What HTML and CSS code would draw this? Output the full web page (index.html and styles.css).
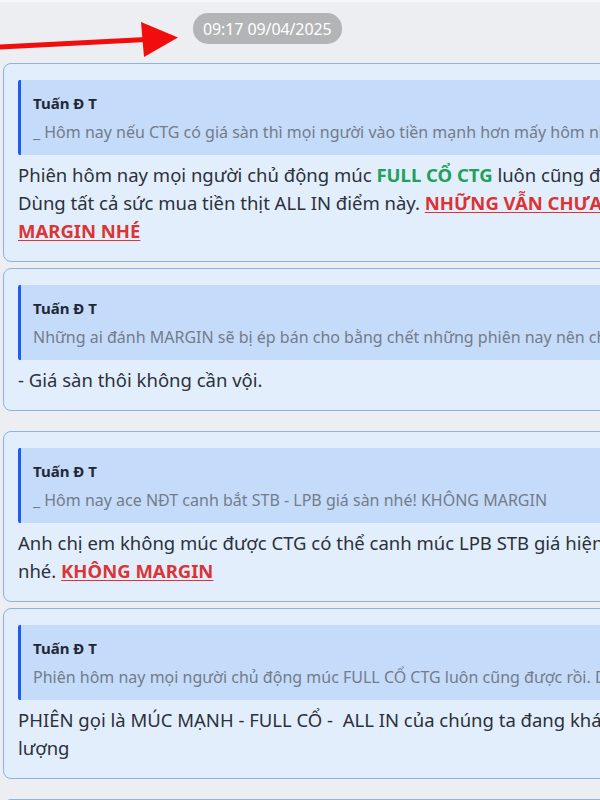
FILE: index.html
```html
<!DOCTYPE html>
<html lang="vi">
<head>
<meta charset="utf-8">
<title>Chat</title>
<link rel="stylesheet" href="styles.css">
</head>
<body>
<div class="screen">
  <svg class="arrow" width="200" height="70" viewBox="0 0 200 70" aria-hidden="true">
    <line x1="-2" y1="47" x2="146" y2="39.5" stroke="#f20d0d" stroke-width="5"/>
    <polygon points="141,22 178,37.5 144,57" fill="#f20d0d"/>
  </svg>
  <div class="stamp-row"><span class="stamp">09:17 09/04/2025</span></div>
  <div class="feed">
    <div class="card">
      <div class="quote">
        <div class="q-name">Tuấn Đ T</div>
        <div class="q-text">_ Hôm nay nếu CTG có giá sàn thì mọi người vào tiền mạnh hơn mấy hôm nhé! Giá sàn là cơ hội</div>
      </div>
      <div class="msg">Phiên hôm nay mọi người chủ động múc <span class="green">FULL CỔ CTG</span> luôn cũng được rồi.<br>Dùng tất cả sức mua tiền thịt ALL IN điểm này. <span class="red">NHỮNG VẪN CHƯA DÙNG<br>MARGIN NHÉ</span></div>
    </div>
    <div class="card card-sep">
      <div class="quote">
        <div class="q-name">Tuấn Đ T</div>
        <div class="q-text">Những ai đánh MARGIN sẽ bị ép bán cho bằng chết những phiên nay nên chú ý</div>
      </div>
      <div class="msg">- Giá sàn thôi không cần vội.</div>
    </div>
    <div class="card">
      <div class="quote">
        <div class="q-name">Tuấn Đ T</div>
        <div class="q-text">_ Hôm nay ace NĐT canh bắt STB - LPB giá sàn nhé! KHÔNG MARGIN</div>
      </div>
      <div class="msg">Anh chị em không múc được CTG có thể canh múc LPB STB giá hiện tại<br>nhé. <span class="red">KHÔNG MARGIN</span></div>
    </div>
    <div class="card card-sep">
      <div class="quote">
        <div class="q-name">Tuấn Đ T</div>
        <div class="q-text">Phiên hôm nay mọi người chủ động múc FULL CỔ CTG luôn cũng được rồi. Dùng tất cả sức mua</div>
      </div>
      <div class="msg">PHIÊN gọi là MÚC MẠNH - FULL CỔ -&nbsp; ALL IN của chúng ta đang khá tốt về khối<br>lượng</div>
    </div>
    <div class="card">
      <div class="quote">
        <div class="q-name">Tuấn Đ T</div>
        <div class="q-text">…</div>
      </div>
    </div>
  </div>
</div>
</body>
</html>
```
FILE: styles.css
```css
html, body {
  margin: 0;
  padding: 0;
}
body {
  background: #eceef1;
  font-family: "Noto Sans", "Open Sans", Arial, sans-serif;
  overflow: hidden;
}
.screen {
  position: relative;
  width: 600px;
  height: 800px;
  overflow: hidden;
  background: #eceef1;
  border-top: 2px solid #f6f7f9;
  box-sizing: border-box;
}
.arrow {
  position: absolute;
  left: 0;
  top: -2px;
}
.stamp-row {
  padding: 11px 0 0 193px;
  height: 31px;
}
.stamp {
  display: inline-flex;
  align-items: center;
  height: 31px;
  padding: 0 10px 0 10px;
  border-radius: 15px;
  background: #b3b4b6;
  color: #ffffff;
  font-size: 16px;
  letter-spacing: -0.1px;
}
.feed {
  padding: 19px 0 0 3px;
  display: flex;
  flex-direction: column;
  gap: 6px;
}
.card {
  width: 880px;
  flex-shrink: 0;
  background: #e3eefc;
  border: 1px solid #8eb0e4;
  border-radius: 8px;
  padding: 16px 14px 16px 14px;
}
.card-sep {
  margin-bottom: 14px;
}
.quote {
  background: #c4dbfa;
  border-left: 3px solid #1c5cf2;
  border-radius: 2px;
  padding: 13px 12px 13px 12px;
}
.q-name {
  font-size: 15px;
  line-height: 20px;
  font-weight: 700;
  color: #1f2835;
}
.q-text {
  margin-top: 9px;
  font-size: 16px;
  line-height: 20px;
  color: #747c89;
  white-space: nowrap;
}
.msg {
  margin-top: 6px;
  font-size: 18.5px;
  line-height: 28px;
  color: #2b313b;
  white-space: nowrap;
}
.green {
  color: #20a05a;
  font-weight: 700;
}
.red {
  color: #da3434;
  font-weight: 700;
  text-decoration: underline;
  text-underline-offset: 2px;
}
```
